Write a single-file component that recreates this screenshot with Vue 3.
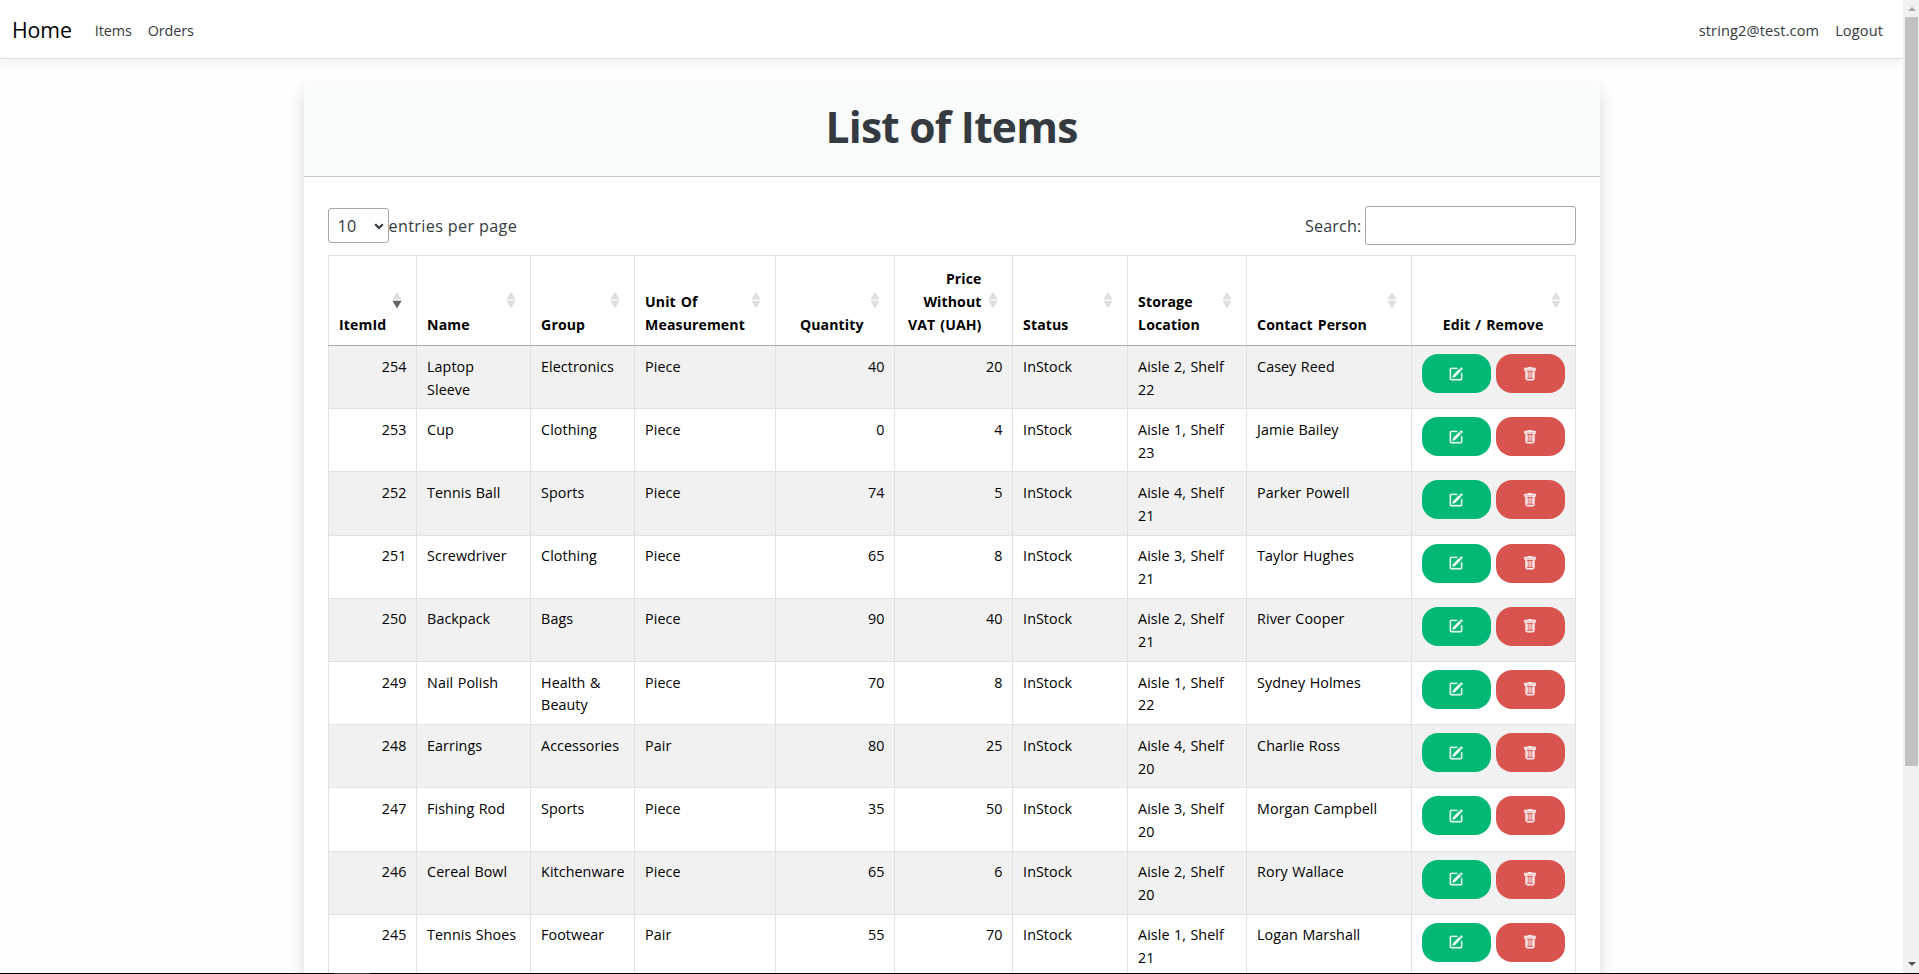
<script setup>
const columns = [
  { label: ['ItemId'], align: 'right', width: 88, sorted: true },
  { label: ['Name'], align: 'left', width: 114 },
  { label: ['Group'], align: 'left', width: 104 },
  { label: ['Unit Of', 'Measurement'], align: 'left', width: 141 },
  { label: ['Quantity'], align: 'right', width: 119 },
  { label: ['Price', 'Without', 'VAT (UAH)'], align: 'right', width: 118 },
  { label: ['Status'], align: 'left', width: 115 },
  { label: ['Storage', 'Location'], align: 'left', width: 119 },
  { label: ['Contact Person'], align: 'left', width: 165 },
  { label: ['Edit / Remove'], align: 'center', width: 165 },
]

const rows = [
  [254, 'Laptop Sleeve', 'Electronics', 'Piece', 40, 20, 'InStock', 'Aisle 2, Shelf 22', 'Casey Reed'],
  [253, 'Cup', 'Clothing', 'Piece', 0, 4, 'InStock', 'Aisle 1, Shelf 23', 'Jamie Bailey'],
  [252, 'Tennis Ball', 'Sports', 'Piece', 74, 5, 'InStock', 'Aisle 4, Shelf 21', 'Parker Powell'],
  [251, 'Screwdriver', 'Clothing', 'Piece', 65, 8, 'InStock', 'Aisle 3, Shelf 21', 'Taylor Hughes'],
  [250, 'Backpack', 'Bags', 'Piece', 90, 40, 'InStock', 'Aisle 2, Shelf 21', 'River Cooper'],
  [249, 'Nail Polish', 'Health & Beauty', 'Piece', 70, 8, 'InStock', 'Aisle 1, Shelf 22', 'Sydney Holmes'],
  [248, 'Earrings', 'Accessories', 'Pair', 80, 25, 'InStock', 'Aisle 4, Shelf 20', 'Charlie Ross'],
  [247, 'Fishing Rod', 'Sports', 'Piece', 35, 50, 'InStock', 'Aisle 3, Shelf 20', 'Morgan Campbell'],
  [246, 'Cereal Bowl', 'Kitchenware', 'Piece', 65, 6, 'InStock', 'Aisle 2, Shelf 20', 'Rory Wallace'],
  [245, 'Tennis Shoes', 'Footwear', 'Pair', 55, 70, 'InStock', 'Aisle 1, Shelf 21', 'Logan Marshall'],
]
</script>

<template>
  <div class="window">
    <div class="viewport">
      <div class="page">
        <nav class="navbar">
          <a class="brand">Home</a>
          <a class="link">Items</a>
          <a class="link">Orders</a>
          <span class="spacer"></span>
          <a class="link account">string2@test.com</a>
          <a class="link account">Logout</a>
        </nav>

        <main class="card">
          <header class="card-header"><h1>List of Items</h1></header>
          <div class="card-body">
            <div class="controls">
              <div class="length">
                <div class="select">
                  <span>10</span>
                  <svg width="10" height="7" viewBox="0 0 10 7"><path d="M1.2 1.3 5 5 8.8 1.3" fill="none" stroke="#343a40" stroke-width="2.2" /></svg>
                </div>
                <span class="per-page">entries per page</span>
              </div>
              <label class="search"><span>Search:</span><input type="text" /></label>
            </div>

            <table>
              <colgroup>
                <col v-for="(c, i) in columns" :key="i" :style="{ width: c.width + 'px' }" />
              </colgroup>
              <thead>
                <tr>
                  <th v-for="(c, i) in columns" :key="i" :class="c.align">
                    <div v-for="line in c.label" :key="line" class="line">{{ line }}</div>
                    <svg class="sort" width="10" height="17" viewBox="0 0 10 17">
                      <path d="M5 0 9.6 7.6H.4z" fill="#dedede" />
                      <path d="M5 16.4 9.6 8.8H.4z" :fill="c.sorted ? '#666' : '#dedede'" />
                    </svg>
                  </th>
                </tr>
              </thead>
              <tbody>
                <tr v-for="row in rows" :key="row[0]">
                  <td v-for="(cell, i) in row" :key="i" :class="columns[i].align">{{ cell }}</td>
                  <td class="actions">
                    <div class="buttons">
                      <button class="edit" aria-label="Edit">
                        <svg width="14" height="14" viewBox="0 0 16 16" fill="#fff">
                          <path d="M15.502 1.94a.5.5 0 0 1 0 .706L14.459 3.69l-2-2L13.502.646a.5.5 0 0 1 .707 0l1.293 1.293zm-1.75 2.456-2-2L4.939 9.21a.5.5 0 0 0-.121.196l-.805 2.414a.25.25 0 0 0 .316.316l2.414-.805a.5.5 0 0 0 .196-.12l6.813-6.814z" stroke="#fff" stroke-width=".3" />
                          <path fill-rule="evenodd" d="M1 13.5A1.5 1.5 0 0 0 2.5 15h11a1.5 1.5 0 0 0 1.5-1.5v-6a.5.5 0 0 0-1 0v6a.5.5 0 0 1-.5.5h-11a.5.5 0 0 1-.5-.5v-11a.5.5 0 0 1 .5-.5H9a.5.5 0 0 0 0-1H2.5A1.5 1.5 0 0 0 1 2.5z" stroke="#fff" stroke-width=".6" />
                        </svg>
                      </button>
                      <button class="remove" aria-label="Remove">
                        <svg width="14" height="14" viewBox="0 0 16 16" fill="#fff">
                          <path d="M5.5 5.5A.5.5 0 0 1 6 6v6a.5.5 0 0 1-1 0V6a.5.5 0 0 1 .5-.5m2.5 0a.5.5 0 0 1 .5.5v6a.5.5 0 0 1-1 0V6a.5.5 0 0 1 .5-.5m3 .5a.5.5 0 0 0-1 0v6a.5.5 0 0 0 1 0z" stroke="#fff" stroke-width=".3" />
                          <path d="M14.5 3a1 1 0 0 1-1 1H13v9a2 2 0 0 1-2 2H5a2 2 0 0 1-2-2V4h-.5a1 1 0 0 1-1-1V2a1 1 0 0 1 1-1H6a1 1 0 0 1 1-1h2a1 1 0 0 1 1 1h3.5a1 1 0 0 1 1 1zM4.118 4 4 4.059V13a1 1 0 0 0 1 1h6a1 1 0 0 0 1-1V4.059L11.882 4zM2.5 3h11V2h-11z" stroke="#fff" stroke-width=".6" />
                        </svg>
                      </button>
                    </div>
                  </td>
                </tr>
              </tbody>
            </table>
          </div>
        </main>
      </div>

      <div class="scrollbar">
        <svg width="8" height="4" viewBox="0 0 8 4"><path d="M4 0 8 4H0z" fill="#a3a3a3" /></svg>
        <div class="thumb"></div>
        <svg class="down" width="8" height="4" viewBox="0 0 8 4"><path d="M4 4 8 0H0z" fill="#505050" /></svg>
      </div>
    </div>
    <div class="edge"><div class="edge-mark"></div></div>
  </div>
</template>

<style>
body {
  margin: 0;
  overflow: hidden;
}
</style>

<style scoped>
* {
  box-sizing: border-box;
}
.window {
  height: 974px;
  display: flex;
  flex-direction: column;
  overflow: hidden;
  background: #fefefe;
  color: #343a40;
  font-family: "Segoe UI", "Open Sans", "Noto Sans", sans-serif;
}
.viewport {
  flex: 1;
  min-height: 0;
  display: flex;
}
.page {
  flex: 1;
  overflow: hidden;
}
.navbar {
  height: 59px;
  display: flex;
  align-items: center;
  padding: 2px 20px 0 12px;
  background: #fff;
  border-bottom: 1px solid #dcdddd;
  box-shadow: 0 4px 12px rgba(0, 0, 0, 0.05);
}
.brand {
  color: #000;
  font-size: 21.3px;
  letter-spacing: -0.1px;
  margin: 0 23px 2px 0;
}
.link {
  font-size: 14.4px;
  letter-spacing: -0.1px;
  margin-right: 16px;
}
.account {
  font-size: 14.6px;
  letter-spacing: 0.1px;
}
.link:last-child {
  margin-right: 0;
}
.spacer {
  flex: 1;
}
.card {
  width: 1296px;
  height: 1100px;
  margin: 24px auto 0;
  background: #fff;
  border-radius: 6px;
  box-shadow: 0 8px 16px rgba(0, 0, 0, 0.15);
}
.card-header {
  height: 94px;
  padding-top: 12px;
  text-align: center;
  background: linear-gradient(#fafbfb, #f7faf9);
  border-bottom: 1px solid #c9cbcb;
  border-radius: 6px 6px 0 0;
}
h1 {
  margin: 0;
  font-size: 42.5px;
  line-height: 64px;
  font-weight: 700;
  letter-spacing: -0.75px;
}
.card-body {
  padding: 29px 24px 0;
}
.controls {
  height: 49px;
  display: flex;
  justify-content: space-between;
  align-items: flex-start;
  font-size: 16.2px;
  letter-spacing: 0.15px;
}
.length {
  display: flex;
  align-items: center;
  padding-top: 2px;
}
.select {
  width: 61px;
  height: 35px;
  display: flex;
  align-items: center;
  justify-content: space-between;
  padding: 1px 4px 0 9px;
  border: 1px solid #a6a6a6;
  border-radius: 3px;
}
.per-page {
  padding-top: 1px;
  letter-spacing: 0.35px;
}
.search {
  display: flex;
  align-items: center;
  gap: 3px;
}
.search input {
  width: 211px;
  height: 39px;
  border: 1px solid #a6a6a6;
  border-radius: 3px;
  background: #fff;
}
table {
  width: 1248px;
  table-layout: fixed;
  border-collapse: separate;
  border-spacing: 0;
  color: #000;
  font-size: 14.3px;
  line-height: 22.9px;
  letter-spacing: 0.06px;
  word-spacing: 0.7px;
}
th,
td {
  border-left: 1px solid #e1e1e1;
}
th:last-child,
td:last-child {
  border-right: 1px solid #e1e1e1;
}
th {
  position: relative;
  height: 91px;
  padding: 0 30px 8px 10.6px;
  vertical-align: bottom;
  border-top: 1px solid #e1e1e1;
  border-bottom: 1px solid #a9a9a9;
  font-weight: 700;
  font-size: 14.1px;
  letter-spacing: 0.1px;
  word-spacing: 1.2px;
}
th.center {
  padding-left: 10px;
  padding-right: 10px;
}
.line {
  white-space: nowrap;
}
.sort {
  position: absolute;
  right: 14px;
  top: 36px;
}
td {
  height: 63.2px;
  padding: 9.6px 9px 0 10.6px;
  vertical-align: top;
  border-top: 1px solid #e1e1e1;
}
td.left {
  padding-right: 12px;
}
td.actions {
  padding: 8px 10px 0;
}
tbody tr:first-child td {
  height: 62.2px;
  border-top: 0;
}
tbody tr:nth-child(odd) {
  background: #f1f1f1;
}
.left {
  text-align: left;
}
.right {
  text-align: right;
}
.center {
  text-align: center;
}
.buttons {
  display: flex;
  gap: 5px;
}
button {
  width: 69px;
  height: 39px;
  display: flex;
  align-items: center;
  justify-content: center;
  padding: 0;
  border: 0;
  border-radius: 16px;
}
.edit {
  background: #02b875;
}
.remove {
  background: #d9534f;
}
.scrollbar {
  width: 16px;
  display: flex;
  flex-direction: column;
  align-items: center;
  padding: 7px 0 7px 1px;
  background: #f1f1f1;
}
.thumb {
  width: 13px;
  height: 749px;
  margin-top: 6px;
  background: #c1c1c1;
}
.down {
  margin-top: auto;
}
.edge {
  height: 1px;
  padding-left: 334px;
  background: #000;
}
.edge-mark {
  width: 36px;
  height: 1px;
  background: #333;
}
</style>
